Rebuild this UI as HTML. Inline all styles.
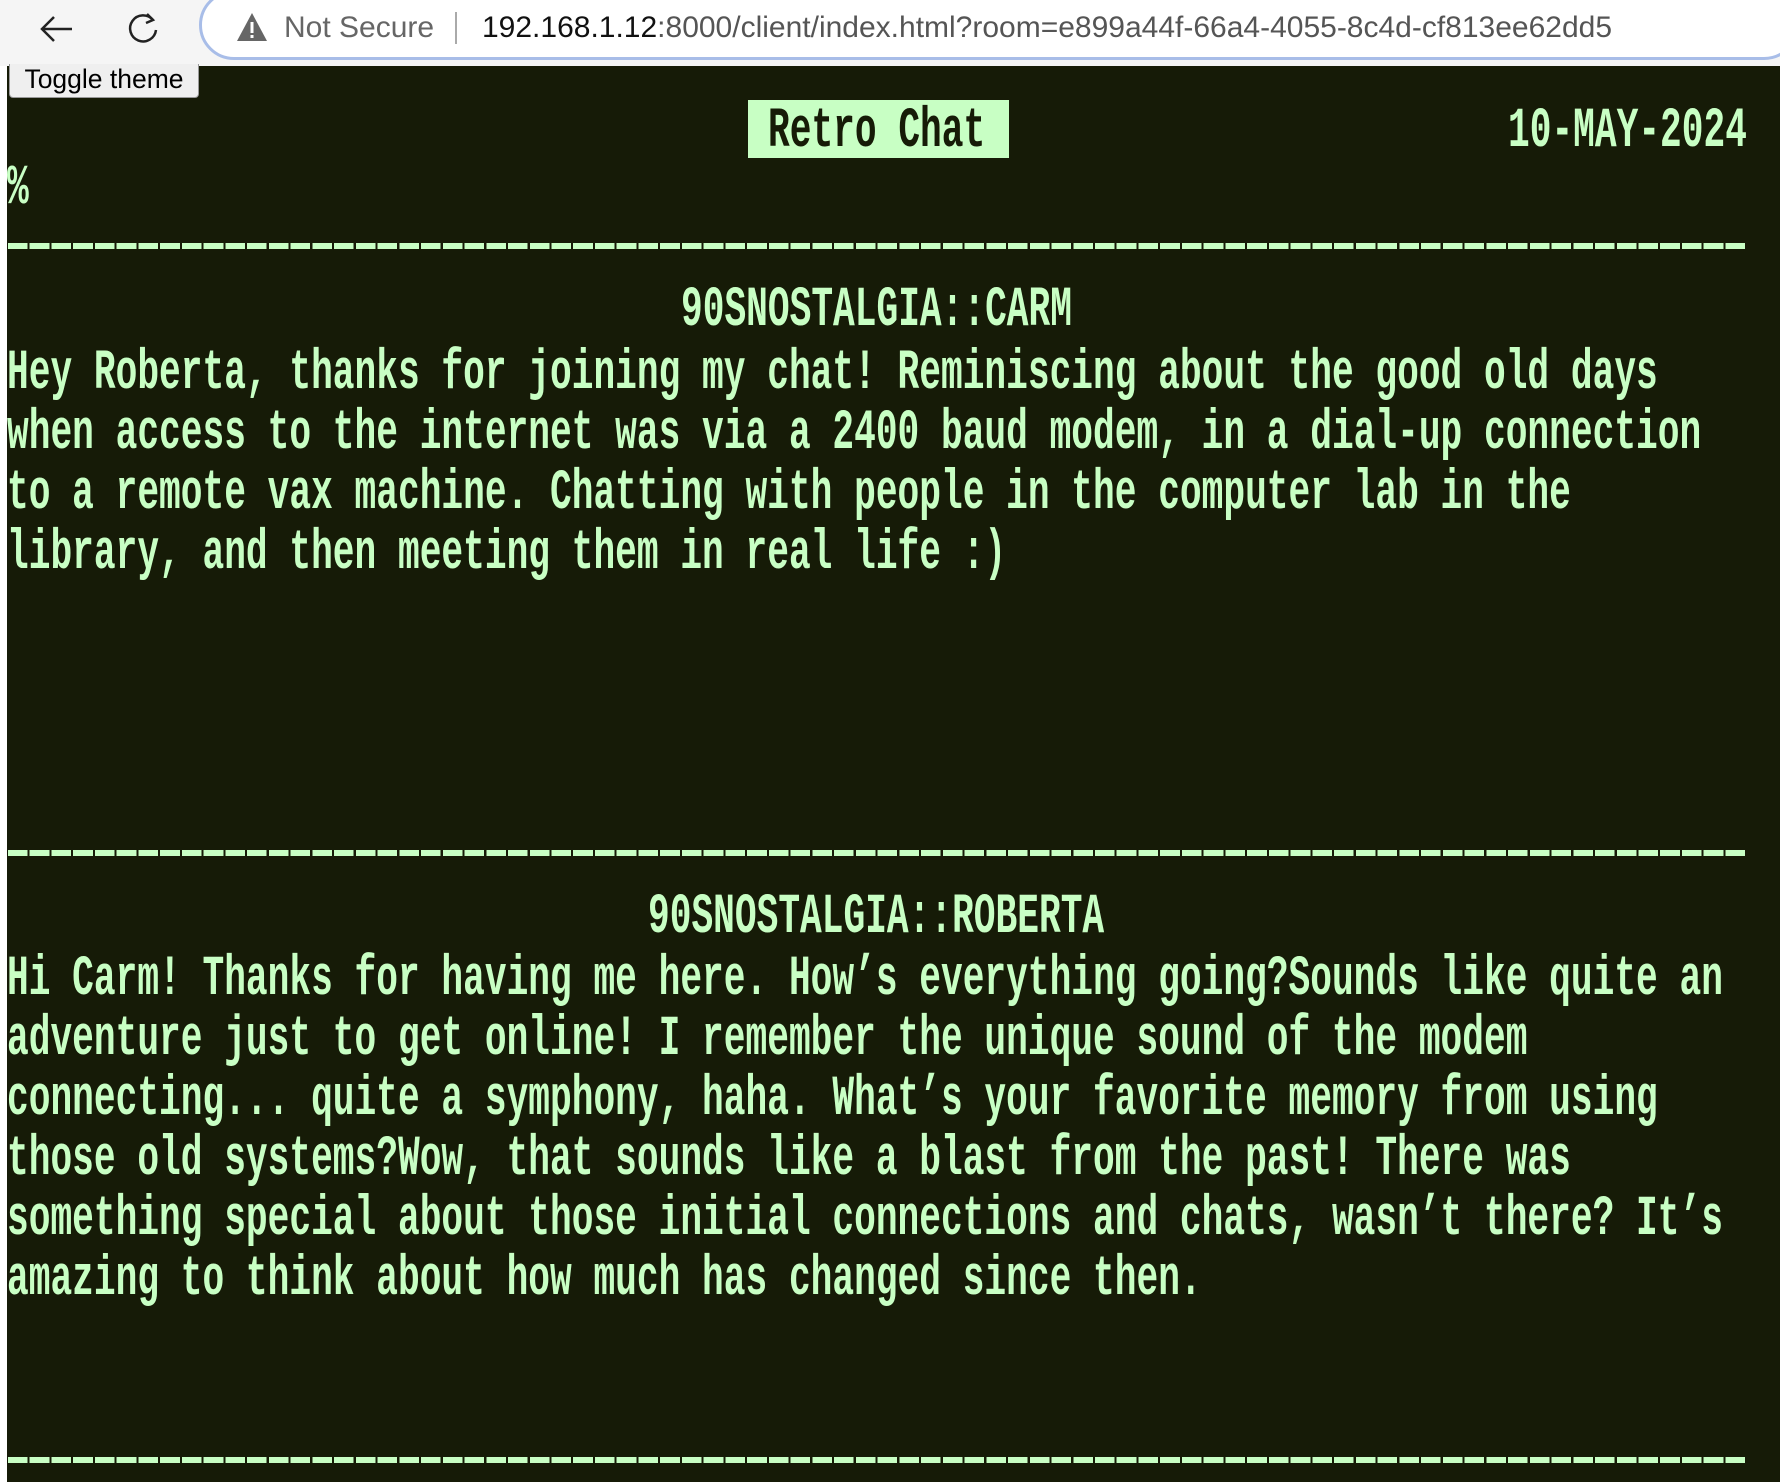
<!DOCTYPE html>
<html><head><meta charset="utf-8"><style>
html,body{margin:0;padding:0;width:1780px;height:1482px;overflow:hidden;background:#fff;font-family:"Liberation Sans",sans-serif}
#chrome{position:absolute;left:0;top:0;width:1780px;height:66px;background:#f5f5f5}
#pill{position:absolute;left:199px;top:-10px;width:1600px;height:70px;border:3px solid #a8bde8;border-radius:36px;background:#fff;box-sizing:border-box}
.ct{position:absolute;font-size:30px;white-space:pre}
#main{position:absolute;left:7px;top:66px;width:1773px;height:1416px;background:#161b07}
.t{position:absolute;font-family:"Liberation Mono",monospace;font-weight:bold;font-size:57px;line-height:60px;color:#c8ffc4;white-space:pre;transform:scaleX(0.635);transform-origin:0 0}
.d{position:absolute;left:8px;width:1739px;height:6px;background:repeating-linear-gradient(90deg,#c8ffc4 0 19.6px,transparent 19.6px 21.74px)}
#btn{position:absolute;left:9px;top:64px;width:190px;height:34px;background:#efefef;border:1px solid #999;border-top:none;border-radius:0 0 4px 4px;box-sizing:border-box;font-size:26.5px;line-height:30px;text-align:center;color:#000}
#title{position:absolute;left:748px;top:100px;width:261px;height:58px;background:#c8ffc4}
</style></head><body>
<div id="chrome">
<svg style="position:absolute;left:38px;top:14px" width="36" height="30" viewBox="0 0 36 30"><path d="M34 15H4M16 3L4 15l12 12" fill="none" stroke="#222" stroke-width="2.5"/></svg>
<svg style="position:absolute;left:125px;top:10px" width="36" height="36" viewBox="0 0 36 36"><path d="M28 10A13 13 0 1 0 31 20" fill="none" stroke="#222" stroke-width="2.5"/><path d="M22 4l6 6-7 3" fill="none" stroke="#222" stroke-width="2.5"/></svg>
<div id="pill"></div>
<svg style="position:absolute;left:236px;top:12px" width="32" height="30" viewBox="0 0 32 30"><path d="M16 1L31 29H1Z" fill="#666"/><rect x="14.5" y="10" width="3" height="11" fill="#fff"/><rect x="14.5" y="23" width="3" height="3" fill="#fff"/></svg>
<div class="ct" style="left:284px;top:11px;color:#666">Not Secure</div>
<div style="position:absolute;left:455px;top:12px;width:2px;height:32px;background:#aaa"></div>
<div class="ct" style="left:482px;top:11px;color:#111">192.168.1.12<span style="color:#555">:8000/client/index.html?room=e899a44f-66a4-4055-8c4d-cf813ee62dd5</span></div>
</div>
<div id="main"></div>
<div id="btn">Toggle theme</div>
<div id="title"></div>
<div class="t" style="left:768px;top:102px;color:#161b07">Retro Chat</div>
<div class="t" style="left:1508px;top:102px">10-MAY-2024</div>
<div class="t" style="left:7px;top:159px">%</div>
<div class="d" style="top:243px"></div>
<div class="t" style="left:681px;top:281px">90SNOSTALGIA::CARM</div>
<div class="t" style="left:7px;top:344px">Hey Roberta, thanks for joining my chat! Reminiscing about the good old days
when access to the internet was via a 2400 baud modem, in a dial-up connection
to a remote vax machine. Chatting with people in the computer lab in the
library, and then meeting them in real life :)</div>
<div class="d" style="top:850px"></div>
<div class="t" style="left:648px;top:888px">90SNOSTALGIA::ROBERTA</div>
<div class="t" style="left:7px;top:950px">Hi Carm! Thanks for having me here. How’s everything going?Sounds like quite an
adventure just to get online! I remember the unique sound of the modem
connecting... quite a symphony, haha. What’s your favorite memory from using
those old systems?Wow, that sounds like a blast from the past! There was
something special about those initial connections and chats, wasn’t there? It’s
amazing to think about how much has changed since then.</div>
<div class="d" style="top:1457px"></div>
</body></html>
